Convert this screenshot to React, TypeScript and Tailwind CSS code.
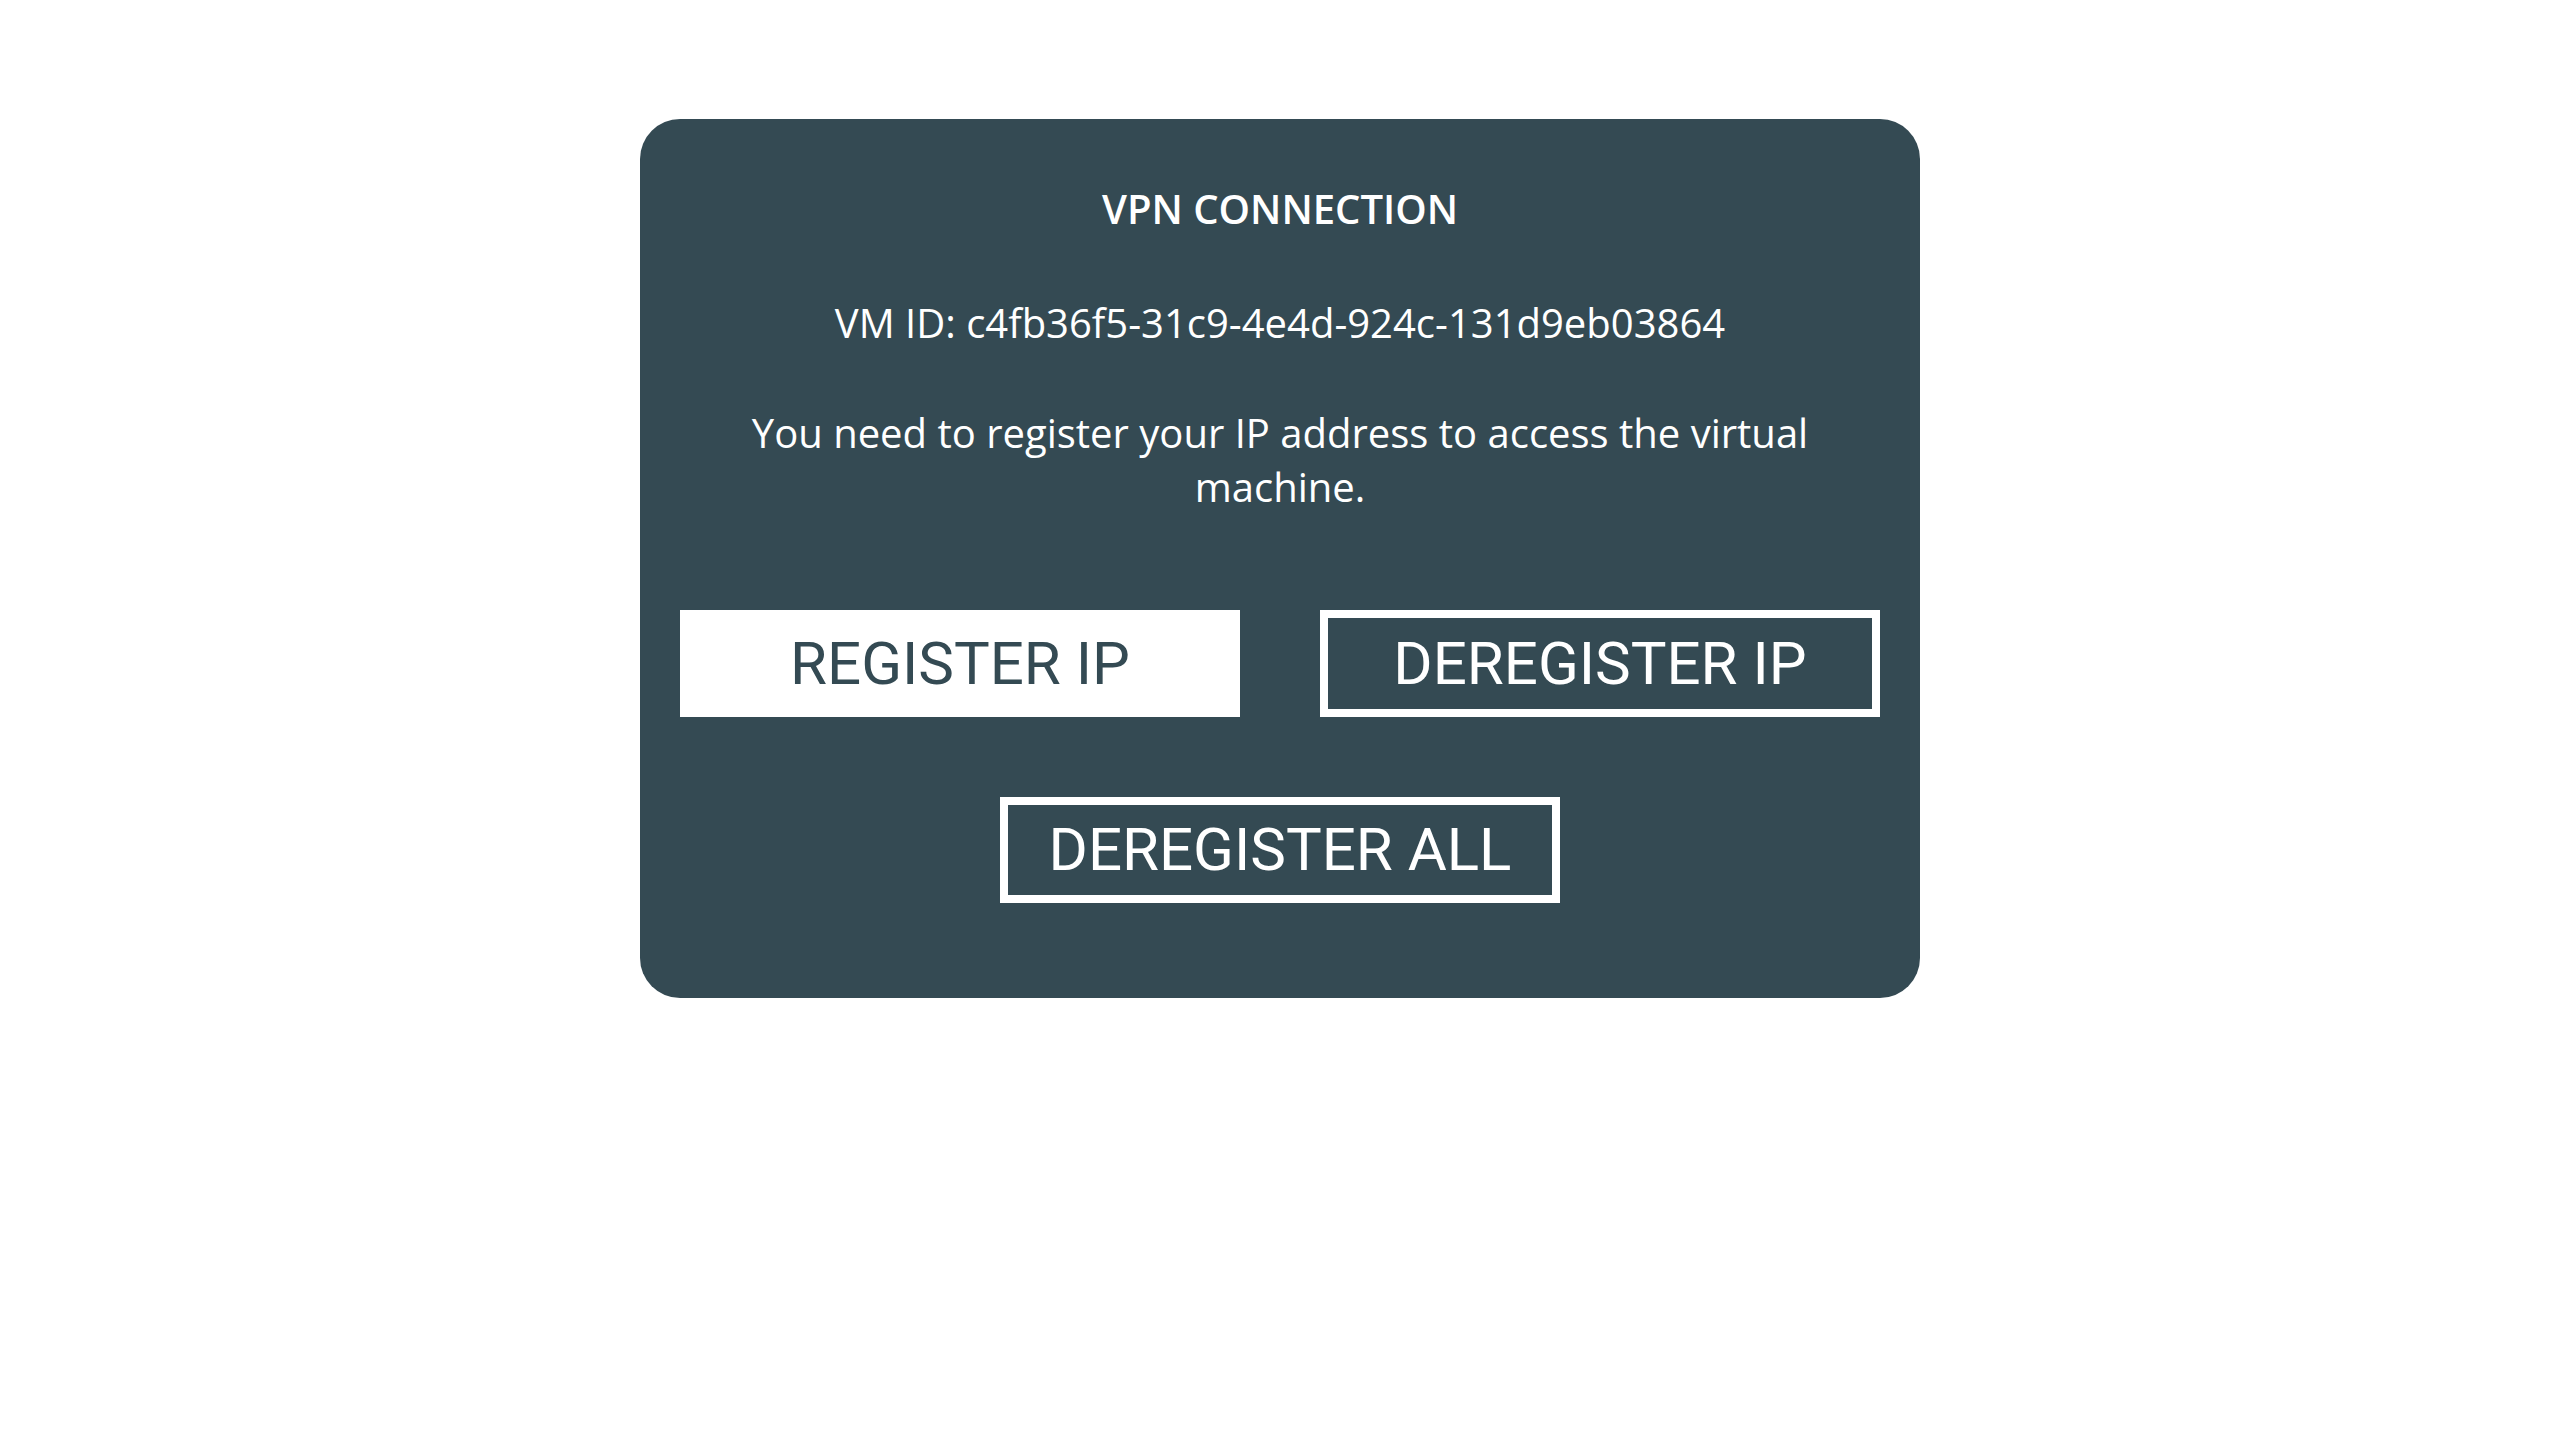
export default function App() {
  return (
    <div className="min-h-screen w-full bg-white pt-[119px]">
      <div
        className="mx-auto flex w-[1280px] flex-col items-center rounded-[40px] bg-[#344a53] px-[40px] pt-[63px] pb-[95px] text-white"
        style={{ fontFamily: '"Open Sans", "Noto Sans", sans-serif' }}
      >
        <h1 className="text-[40px] font-semibold leading-[54px]">VPN CONNECTION</h1>
        <p className="mt-[60px] text-[40px] leading-[54px]">
          VM ID: c4fb36f5-31c9-4e4d-924c-131d9eb03864
        </p>
        <p className="mt-[56px] text-center text-[40px] leading-[54px]">
          You need to register your IP address to access the virtual machine.
        </p>
        <div
          className="mt-[96px] flex w-full flex-col items-center gap-[80px]"
          style={{ fontFamily: 'Roboto, "Liberation Sans", sans-serif' }}
        >
          <div className="flex w-full justify-between">
            <button className="flex h-[107px] w-[560px] items-center justify-center bg-white text-[60px] text-[#344a53]">
              REGISTER IP
            </button>
            <button className="flex h-[107px] w-[560px] items-center justify-center border-[8px] border-white bg-transparent text-[60px] text-white">
              DEREGISTER IP
            </button>
          </div>
          <button className="flex h-[106px] w-[560px] items-center justify-center border-[8px] border-white bg-transparent text-[60px] text-white">
            DEREGISTER ALL
          </button>
        </div>
      </div>
    </div>
  );
}
